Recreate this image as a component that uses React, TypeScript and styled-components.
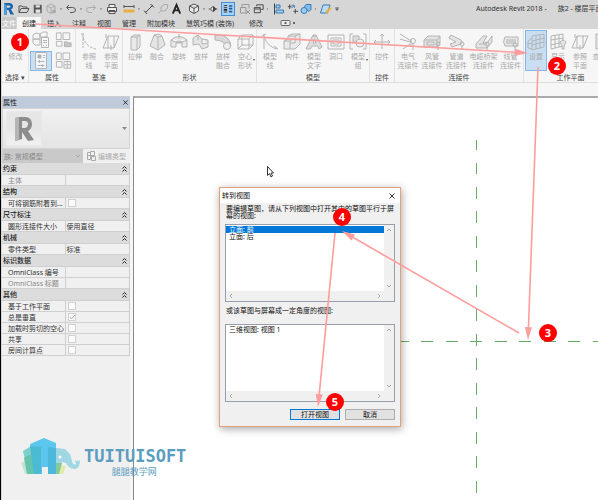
import React from "react";
import styled, { createGlobalStyle, css } from "styled-components";

const Global = createGlobalStyle`
  * { box-sizing: border-box; }
  html, body { margin: 0; height: 100%; overflow: hidden; }
  #root { height: 100%; }
  body, button, select, input, table {
    font-family: "Noto Sans", "Noto Sans CJK SC", sans-serif;
    font-size: 7px;
    line-height: 9px;
    color: #333;
  }
  button { border: 0; padding: 0; margin: 0; background: none; }
  svg { display: block; }
`;

const Window = styled.div`
  position: relative;
  display: flex;
  flex-direction: column;
  height: 100vh;
  overflow: hidden;
  border-left: 1px solid #000;
  padding-left: 1px;
  background: #d6d6d6;
`;

/* ---------- title bar ---------- */

const TitleBar = styled.header`
  display: flex;
  align-items: center;
  flex: none;
  height: 17px;
  overflow: hidden;
  white-space: nowrap;
`;

const QuickButton = styled.button<{ $w: number; $on?: boolean }>`
  display: flex;
  flex: none;
  align-items: center;
  justify-content: center;
  width: ${(p) => p.$w}px;
  height: 14px;
  ${(p) =>
    p.$on &&
    css`
      background: #a9d0f5;
      border: 1px solid #3d8fdd;
    `}
`;

const Spacer = styled.span<{ $w: number }>`
  flex: none;
  width: ${(p) => p.$w}px;
`;

const Title = styled.h1`
  display: flex;
  gap: 11px;
  margin: 0 0 0 135px;
  font-size: 7px;
  font-weight: 400;
  color: #333;
`;

const quickArt: Record<string, React.ReactNode> = {
  logo: (
    <>
      <path d="M2 1h5q4 0 4 3.500q0 2-2 3l3 5H8.500L6.500 8H5v4.500H2z" fill="#1b62a8" />
      <path d="M5 3.500h2q1.500 0 1.500 1T7 5.800H5z" fill="#d6d6d6" />
      <path d="M2 1l3 2.500v9H2z" fill="#4d9ad8" />
    </>
  ),
  open: <path d="M2 10.500V4h3l1 1h4v1.500M2 10.500l2-4h8l-2 4z" fill="none" stroke="#555" />,
  save: (
    <>
      <path d="M3 2.500h8.500v9H3z" fill="#555" />
      <path d="M5 3h4.500v2.500H5zM5 7.500h5V11H5z" fill="#e6e6e6" />
    </>
  ),
  sync: (
    <>
      <path d="M7 2l4 2v5l-4 2.500L3 9V4zM3 4l4 2 4-2M7 6v5" fill="none" stroke="#aaa" />
      <circle cx="10" cy="9.500" r="2" fill="#aaa" />
    </>
  ),
  undo: <path d="M5 3L2.500 5.500 5 8M3 5.500h5.500q3 0 3 2.500T8 10.500H6" fill="none" stroke="#555" />,
  redo: <path d="M9 3l2.500 2.500L9 8M11 5.500H5.500q-3 0-3 2.500T6 10.500h2" fill="none" stroke="#aaa" />,
  print: <path d="M4 2.500h6v3H4zM2.500 5.500h9v4h-9zM4 8.500h6v3H4z" fill="#eee" stroke="#555" />,
  measure: (
    <>
      <path d="M1.500 7.500h11v3h-11z" fill="#e8b040" />
      <path d="M2 4.500h10M2 3v3M12 3v3" stroke="#555" fill="none" />
    </>
  ),
  line: <path d="M3 11l8-8M2 8.500l3 3.500M8.500 2l3.500 3.500" stroke="#444" fill="none" />,
  tag: <path d="M2.500 11.500L5 8.500M5 8.500V5l3-2.500h3.500V6L9 9H5" stroke="#aaa" fill="none" />,
  text: <path d="M3 12L7 2.500 11 12M4.500 8.500h5" stroke="#222" strokeWidth="2" fill="none" />,
  cube: <path d="M7 2l4.500 2v5L7 11.500 2.500 9V4zM2.500 4L7 6.500 11.500 4M7 6.500v5" stroke="#555" fill="#eaeaea" />,
  section: (
    <>
      <path d="M2 7h2M10 7h2" stroke="#444" />
      <circle cx="7" cy="7" r="2.500" fill="#eee" stroke="#444" />
      <path d="M7 3.500l4 3.500-4 3.500z" fill="#444" />
    </>
  ),
  thin: (
    <>
      <path d="M2 3h4M2 5.500h4M2 10.500h4" stroke="#222" strokeWidth="1" />
      <path d="M2 8h4" stroke="#222" strokeWidth="2" />
      <path d="M8 3.500h4M8 6.500h4M8 10h4" stroke="#1d5d9c" strokeWidth="2" />
    </>
  ),
  close: <path d="M4 5V2.500h7v4M2.500 5.500H8V11H2.500zM8 8l4 4m0-4l-4 4" stroke="#999" fill="none" />,
  windows: <path d="M5 4V2.500h7v5h-2M2.500 5.500H9V11H2.500zM2.500 7H9" stroke="#444" fill="none" />,
  alignLeft: (
    <>
      <path d="M2.500 1.500v11" stroke="#444" />
      <path d="M4 3h4v3H4zM4 8h7.500v3H4z" fill="#9ecbf0" stroke="#3b7cb8" />
    </>
  ),
  move: (
    <>
      <path d="M4 2v5M2 4.500h4M10 7v5M8 9.500h5" stroke="#444" fill="none" />
      <path d="M6 6l3-3M9 3v3M9 3H6" stroke="#3b7cb8" fill="none" />
    </>
  ),
  join: (
    <>
      <path d="M5 5.500L7 2.500h5v5l-2 2z" fill="#7fbdec" stroke="#3b7cb8" />
      <circle cx="5" cy="8.500" r="3" fill="#9ecbf0" stroke="#3b7cb8" />
    </>
  ),
  edit: (
    <>
      <path d="M4 3h7l-2.500 8h-7z" fill="#bcdcf6" stroke="#3b7cb8" />
      <path d="M6 10l5-5 1.500 1.500L8 11.500z" fill="#e8b040" />
    </>
  ),
  menu: <path d="M4 4.500h6M4.500 6.500h5L7 9.500z" stroke="#555" fill="#555" />,
  dot: <path d="M5.500 6.500h3L7 8z" fill="#555" stroke="#555" />,
};

function QuickIcon({ name }: { name: string }) {
  return (
    <svg width="14" height="14" viewBox="0 0 14 14" aria-hidden="true">
      {quickArt[name]}
    </svg>
  );
}

const quickItems: [string, number, string?][] = [
  ["logo", 14, "Revit"],
  ["open", 15, "打开"],
  ["save", 13, "保存"],
  ["sync", 14, "同步"],
  ["dot", 6],
  ["undo", 14, "放弃"],
  ["dot", 6],
  ["redo", 14, "重做"],
  ["dot", 6],
  ["print", 16, "打印"],
  ["", 2],
  ["measure", 14, "测量"],
  ["dot", 6],
  ["line", 14, "尺寸标注"],
  ["tag", 14, "标记"],
  ["text", 13, "文字"],
  ["", 4],
  ["cube", 14, "三维视图"],
  ["dot", 6],
  ["section", 12, "剖面"],
  ["", 2],
  ["thin", 14, "细线"],
  ["", 3],
  ["close", 14, "关闭隐藏窗口"],
  ["windows", 13, "切换窗口"],
  ["dot", 5],
  ["", 2],
  ["alignLeft", 14, "对齐"],
  ["move", 13, "移动"],
  ["join", 14, "连接"],
  ["dot", 5],
  ["edit", 15, "编辑"],
  ["menu", 8, "自定义"],
];

/* ---------- tabs ---------- */

const Tabs = styled.nav`
  display: flex;
  flex: none;
  height: 12px;
  gap: 1px;
  white-space: nowrap;
`;

const Tab = styled.button<{ $kind?: "file" | "active" | "wide" }>`
  flex: none;
  padding: 0 5px;
  height: 12px;
  ${(p) =>
    p.$kind === "file" &&
    css`
      padding: 0;
      background: #c8c8c8;
      color: #fff;
    `}
  ${(p) =>
    p.$kind === "active" &&
    css`
      background: #f6f6f6;
      color: #222;
    `}
  ${(p) =>
    p.$kind === "wide" &&
    css`
      padding-right: 9px;
    `}
`;

/* ---------- ribbon ---------- */

const Ribbon = styled.section`
  display: flex;
  flex: none;
  height: 54px;
  overflow: hidden;
  background: #f6f6f6;
  border-bottom: 1px solid #ddd;
`;

const Group = styled.div<{ $w: number }>`
  display: flex;
  flex-direction: column;
  flex: none;
  width: ${(p) => p.$w}px;
  padding-top: 1px;
  border-right: 1px solid #e2e2e2;
`;

const Tools = styled.div<{ $pad?: number }>`
  display: flex;
  height: 42px;
  padding-left: ${(p) => p.$pad ?? 1}px;
`;

const GroupLabel = styled.div`
  padding-top: 1px;
  text-align: center;
  white-space: nowrap;
  color: #444;
`;

const Tool = styled.button<{ $w?: number; $on?: boolean }>`
  position: relative;
  display: flex;
  flex-direction: column;
  flex: none;
  align-items: center;
  width: ${(p) => p.$w ?? 22}px;
  height: 41px;
  padding-top: 1px;
  border: 1px solid ${(p) => (p.$on ? "#86b6e6" : "transparent")};
  background: ${(p) => (p.$on ? "#c8def3" : "none")};
  color: #aaa;
`;

const ToolText = styled.span`
  white-space: pre;
  text-align: center;
`;

const MoreMark = styled.i`
  position: absolute;
  right: 0;
  bottom: 9px;
  border: 1px solid transparent;
  border-top: 2px solid #555;
  border-bottom: 0;
`;

const PropGrid = styled.div`
  display: grid;
  grid-template-columns: 22px 21px;
  grid-template-rows: 20px 20px;
  gap: 1px;
`;

const PropButton = styled.button<{ $on?: boolean }>`
  display: flex;
  align-items: center;
  justify-content: center;
  border: 1px solid ${(p) => (p.$on ? "#86b6e6" : "transparent")};
  background: ${(p) => (p.$on ? "#c8def3" : "none")};
`;

const toolArt: Record<string, React.ReactNode> = {
  arrow: <path d="M7 3v12l3-3 2 5 2-1-2-5h4z" />,
  types: (
    <>
      <path d="M2 5l3-2 4 1v5H2zM9 4l3-2h4v5H9zM2 9h7v6H4l-2-2z" />
      <path d="M10.500 7.500h7v10h-7z" fill="#f6f6f6" />
      <path d="M12 10.500h4M12 12.500h4M12 15.500h1M15 15.500h1" />
    </>
  ),
  family: (
    <>
      <path d="M2.500 2.500h5v7h-5zM9.500 2.500h7v7h-7zM2.500 11.500h6v5h-6z" />
      <path d="M11 12h3l1 1h3v4h-7z" fill="#c4c4c4" />
    </>
  ),
  props: (
    <>
      <path d="M4.500 1.500h11v16h-11z" fill="#f2f6fa" />
      <path d="M7 4h3v3H7z" fill="#aaa" />
      <path d="M12 4.500h2M12 6.500h2M6.500 10.500h7M6.500 14.500h7M8.500 9v3M11.500 13v3" />
    </>
  ),
  cats: (
    <>
      <path d="M2.500 1.500h5v7h-5zM9.500 1.500h7v7h-7zM2.500 10.500h6v6h-6z" />
      <path d="M10.500 10.500h7v7h-7zM14 10.500v7M10.500 14h7" fill="#f6f6f6" />
    </>
  ),
  refLine: <path d="M4 2v14M4 5q3 10 13 12M2 2h4" strokeDasharray="3 1" />,
  plane: <path d="M7 4h11l-5 12H2zM7 4v12M13 4v12M5 2v4M10 13v5" />,
  extrude: <path d="M6 5l3-2h6v12l-3 3H6zM6 5h6v13M12 5l3-2" fill="#e9e9e9" />,
  blend: <path d="M7 3l5-1 3 2 3 9-7 5-8-4zM7 3l4 2 4-1M11 5v13" fill="#e4e4e4" />,
  revolve: <path d="M2 8q8-7 16 0v7h-5v-4H7v4H2zM2 8q8 5 16 0M7 11q0-2 3-2t3 2M10 2v5" fill="#e9e9e9" />,
  sweep: <path d="M2 6l5-3 4 4 6 1v7l-6 2-3-5-6 1zM11 7v5l6-1M7 3v5" fill="#e4e4e4" />,
  sweepBlend: (
    <>
      <path d="M2 3h6q9 2 10 11l-4 3Q12 8 2 8z" fill="#d9d9d9" />
      <circle cx="14" cy="14" r="3.500" fill="#f0f0f0" />
    </>
  ),
  voidForm: <path d="M3 7l4-4h11v10l-4 4H3zM3 7h11v10M14 7l4-4M7 3v10h11M3 17l4-4" />,
  modelLine: <path d="M4 2v15M4 5q4 10 13 12M2 4l4-2M14 14l4 3" />,
  component: <path d="M2 9l4-2V4l4-2h8v10l-5 5H2zM2 9h6v8M6 4h7l5-2M13 4v7H8M8 9l3-2" fill="#e9e9e9" />,
  modelText: <path d="M2 17L9 3h3l6 12-3 2-1.500-3H8l-1.500 3zM9 11h3l-1.500-4zM9 3l1 2M12 3l-1 2" fill="#dedede" />,
  opening: <path d="M2 3h16v14H2zM5 6h10v8H5zM7 8h6v4H7z" />,
  group: (
    <>
      <path d="M5 2H2v15h3M15 2h3v15h-3" />
      <path d="M5 4h6v6H5z" fill="#ddd" />
      <circle cx="12" cy="11" r="4" fill="#f0f0f0" />
    </>
  ),
  control: <path d="M10 2v15M2 10h16M8 4l2-2 2 2M4 8l-2 2 2 2M16 8l2 2-2 2" />,
  electric: (
    <>
      <path d="M2 2l11 7M2 7l10 3M5 17l7-5M13 7v8" />
      <circle cx="15" cy="9" r="2.500" />
      <path d="M15 12v6" />
    </>
  ),
  duct: (
    <>
      <path d="M2 8l4-4h12v7l-3 4H2zM2 8h13v7M15 8l3-4M5 10h7v3H5z" fill="#e4e4e4" />
      <circle cx="16" cy="12" r="2" />
      <path d="M16 14v4" />
    </>
  ),
  pipe: (
    <>
      <path d="M4 3l10 5q3 2 0 4l-9 3-2-3 6-2-7-4z" fill="#e4e4e4" />
      <circle cx="15" cy="12" r="2" />
      <path d="M15 14v4" />
    </>
  ),
  tray: (
    <>
      <path d="M2 12l7-8h4l-4 7h4l5-7v6l-5 6H2zM5 12h8" fill="#e4e4e4" />
      <circle cx="13" cy="12" r="2" />
      <path d="M13 14v4" />
    </>
  ),
  conduit: (
    <>
      <path d="M4 5h13v9H4q-3-4 0-9zM6 7v5M8 7v5M10 7v5M12 7v5M14 7v5" fill="#e8e8e8" />
      <circle cx="14" cy="13" r="2" />
      <path d="M14 15v4" />
    </>
  ),
  setPlane: <path d="M6 4l12-2v13l-12 3zM6 9l12-3M6 13l12-3M10 3v14M14 3v13M6 6L2 9v7l4 1M2 12l4-1" />,
  showPlane: (
    <>
      <path d="M3 4l12-2v12L3 17zM3 8l12-2M3 13l12-3M7 3v13M11 3v12" />
      <path d="M12 10q3-4 6 0l-2 4v3h-2v-3z" fill="#e4e4e4" />
    </>
  ),
  viewer: <path d="M3 2h14v15H3zM6 5h8v9H6z" fill="#e4e4e4" />,
};

function ToolIcon({ name }: { name: string }) {
  return (
    <svg width="20" height="20" viewBox="0 0 20 20" fill="none" stroke="#b4b4b4" strokeWidth="1" aria-hidden="true">
      {toolArt[name]}
    </svg>
  );
}

type ToolDef = { icon: string; text: string; w?: number; on?: boolean; more?: boolean };
type GroupDef = { name: string; w: number; pad?: number; tools: ToolDef[] };

const groups: GroupDef[] = [
  { name: "基准", w: 47, pad: 2, tools: [
    { icon: "refLine", text: "参照\n线" },
    { icon: "plane", text: "参照\n平面" },
  ] },
  { name: "形状", w: 134, tools: [
    { icon: "extrude", text: "拉伸" },
    { icon: "blend", text: "融合" },
    { icon: "revolve", text: "旋转" },
    { icon: "sweep", text: "放样" },
    { icon: "sweepBlend", text: "放样\n融合" },
    { icon: "voidForm", text: "空心\n形状", more: true },
  ] },
  { name: "模型", w: 113, pad: 2, tools: [
    { icon: "modelLine", text: "模型\n线" },
    { icon: "component", text: "构件" },
    { icon: "modelText", text: "模型\n文字" },
    { icon: "opening", text: "洞口" },
    { icon: "group", text: "模型\n组", more: true },
  ] },
  { name: "控件", w: 25, tools: [{ icon: "control", text: "控件" }] },
  { name: "连接件", w: 129, tools: [
    { icon: "electric", text: "电气\n连接件", w: 24 },
    { icon: "duct", text: "风管\n连接件", w: 24 },
    { icon: "pipe", text: "管道\n连接件", w: 25 },
    { icon: "tray", text: "电缆桥架\n连接件", w: 29 },
    { icon: "conduit", text: "线管\n连接件", w: 25 },
  ] },
  { name: "工作平面", w: 94, tools: [
    { icon: "setPlane", text: "设置", on: true },
    { icon: "showPlane", text: "显示" },
    { icon: "plane", text: "参照\n平面" },
    { icon: "viewer", text: "查看器", w: 24 },
  ] },
];

/* ---------- workspace ---------- */

const Workspace = styled.main`
  display: flex;
  flex: 1;
  min-height: 0;
  padding-top: 13px;
  background: #f6f6f6;
`;

const Palette = styled.aside`
  flex: none;
  width: 128px;
  border-top: 1px solid #ccc;
  background: #f0f0f0;
`;

const PaletteHead = styled.div`
  display: flex;
  align-items: center;
  justify-content: space-between;
  height: 11px;
  padding: 0 1px;
  background: #bfcbdb;
  color: #222;
`;

const CloseButton = styled.button`
  display: flex;
  align-items: center;
  justify-content: center;
  width: 8px;
  height: 9px;
`;

const TypePicker = styled.button`
  display: flex;
  align-items: center;
  justify-content: space-between;
  width: 100%;
  height: 41px;
  padding: 0 2px 0 3px;
  border: 1px solid #d4d4d4;
  background: linear-gradient(#f1f1f1, #e4e4e4);
`;

const Thumb = styled.span`
  display: flex;
  align-items: center;
  justify-content: center;
  width: 36px;
  height: 35px;
  border: 1px solid #e8e8e8;
  background: linear-gradient(#e6e6e6 50%, #efefef 90%);
`;

const TypeRow = styled.div`
  display: flex;
  align-items: center;
  height: 14px;
`;

const SelectBox = styled.div`
  display: grid;
  align-items: center;
  width: 81px;
  height: 14px;
  background: #c9c9c9;
  > * { grid-area: 1 / 1; }
  > svg { justify-self: end; margin-right: 2px; pointer-events: none; }
`;

const TypeSelect = styled.select`
  appearance: none;
  height: 14px;
  border: 0;
  border-radius: 0;
  padding: 0 2px;
  background: none;
  color: #888;
`;

const EditType = styled.button`
  display: flex;
  flex: 1;
  align-items: center;
  gap: 2px;
  padding-left: 3px;
  color: #aaa;
`;

const PropTable = styled.table`
  width: 100%;
  table-layout: fixed;
  border-collapse: separate;
  border-spacing: 0;
  border-right: 1px solid #ccc;
`;

const SectionHead = styled.th`
  height: 12px;
  padding: 0 2px 0 1px;
  background: #dcdcdc;
  border-bottom: 1px solid #cfcfcf;
  text-align: left;
  font-weight: 500;
  color: #222;
`;

const HeadLine = styled.span`
  display: flex;
  align-items: center;
  justify-content: space-between;
`;

const NameCell = styled.th<{ $dim?: boolean }>`
  height: 11px;
  padding: 0 0 0 6px;
  border-bottom: 1px solid #cfcfcf;
  border-right: 1px solid #cfcfcf;
  overflow: hidden;
  white-space: nowrap;
  text-align: left;
  font-weight: 400;
  color: ${(p) => (p.$dim ? "#888" : "#333")};
`;

const ValueCell = styled.td`
  height: 11px;
  padding: 0 1px;
  border-bottom: 1px solid #cfcfcf;
`;

const Check = styled.input`
  appearance: none;
  display: block;
  width: 8px;
  height: 8px;
  margin: 0 1px;
  border: 1px solid #d0d0d0;
  background: #fcfcfc;
`;

const CheckBox = styled.span`
  display: grid;
  width: 10px;
  > * { grid-area: 1 / 1; }
  > svg { pointer-events: none; }
`;

type Prop = { label: string; value?: string; check?: boolean; dim?: boolean };
const sections: { name: string; rows: Prop[] }[] = [
  { name: "约束", rows: [{ label: "主体", dim: true }] },
  { name: "结构", rows: [{ label: "可将钢筋附着到...", check: false }] },
  { name: "尺寸标注", rows: [{ label: "圆形连接件大小", value: "使用直径" }] },
  { name: "机械", rows: [{ label: "零件类型", value: "标准" }] },
  { name: "标识数据", rows: [{ label: "OmniClass 编号" }, { label: "OmniClass 标题", dim: true }] },
  { name: "其他", rows: [
    { label: "基于工作平面", check: false },
    { label: "总是垂直", check: true },
    { label: "加载时剪切的空心", check: false },
    { label: "共享", check: false },
    { label: "房间计算点", check: false },
  ] },
];

const Canvas = styled.div`
  flex: 1;
  min-width: 0;
  margin-left: 3px;
  border-top: 2px solid #aaa;
  border-left: 1px solid #888;
  background: #fff;
`;

/* ---------- dialog ---------- */

const Dialog = styled.div`
  position: absolute;
  left: 218px;
  top: 187px;
  width: 182px;
  border: 1px solid #e3a179;
  background: #f0f0f0;
  box-shadow: 1px 2px 8px rgba(0, 0, 0, 0.35);
  color: #111;
`;

const DialogHead = styled.div`
  display: flex;
  align-items: center;
  justify-content: space-between;
  height: 15px;
  padding: 0 4px 0 2px;
  background: #fff;
`;

const DialogBody = styled.div`
  padding: 2px 5px 6px;
`;

const Prompt = styled.p<{ $single?: boolean }>`
  margin: 0;
  padding: ${(p) => (p.$single ? "5px 0 10px 1px" : "0 0 5px 1px")};
  line-height: 7px;
`;

const ListBox = styled.div`
  display: grid;
  grid-template-columns: 1fr 10px;
  grid-template-rows: 1fr 10px;
  height: 78px;
  border: 1px solid #9a9eac;
  background: #f0f0f0;
`;

const List = styled.ul`
  margin: 0;
  padding: 1px 0;
  list-style: none;
  background: #fff;
`;

const Option = styled.li<{ $on?: boolean }>`
  height: 7px;
  padding-left: 3px;
  line-height: 7px;
  background: ${(p) => (p.$on ? "#0078d7" : "none")};
  color: ${(p) => (p.$on ? "#fff" : "#111")};
`;

const ScrollBar = styled.div<{ $vertical?: boolean }>`
  display: flex;
  flex-direction: ${(p) => (p.$vertical ? "column" : "row")};
  align-items: center;
  justify-content: space-between;
  padding: 2px;
`;

const Actions = styled.div`
  display: flex;
  justify-content: flex-end;
  gap: 5px;
  padding-top: 7px;
`;

const DialogButton = styled.button<{ $main?: boolean }>`
  width: 50px;
  height: 11px;
  color: #111;
  background: #e1e1e1;
  border: 1px solid ${(p) => (p.$main ? "#0078d7" : "#adadad")};
`;

/* ---------- annotations ---------- */

const Overlay = styled.svg`
  position: absolute;
  left: -1px;
  top: 0;
  pointer-events: none;
`;

const Badge = styled.span<{ $x: number; $y: number }>`
  position: absolute;
  left: ${(p) => p.$x}px;
  top: ${(p) => p.$y}px;
  width: 18px;
  height: 18px;
  border-radius: 50%;
  background: #f00;
  color: #fff;
  font: 700 11px/17px "Noto Sans", sans-serif;
  text-align: center;
`;

const Brand = styled.div`
  position: absolute;
  left: 20px;
  bottom: 22px;
  display: flex;
  gap: 3px;
`;

const BrandText = styled.div`
  display: flex;
  flex-direction: column;
  align-items: center;
  padding-top: 10px;
  color: #5b9dbf;
`;

const BrandName = styled.strong`
  font: 700 17px/19px "DejaVu Sans Mono", monospace;
`;

const BrandSub = styled.span`
  padding-right: 2px;
  font-size: 9px;
  line-height: 12px;
`;

function Chevron({ dir }: { dir: "up" | "down" | "left" | "right" }) {
  const d = { up: "M1 4l2-2 2 2", down: "M1 2l2 2 2-2", left: "M4 1L2 3l2 2", right: "M2 1l2 2-2 2" }[dir];
  return (
    <svg width="6" height="6" viewBox="0 0 6 6" fill="none" stroke="#aaa" aria-hidden="true">
      <path d={d} />
    </svg>
  );
}

function ListPanel({ label, items, selected }: { label: string; items: string[]; selected?: number }) {
  return (
    <ListBox>
      <List role="listbox" aria-label={label}>
        {items.map((t, i) => (
          <Option key={t} role="option" aria-selected={i === selected} $on={i === selected}>
            {t}
          </Option>
        ))}
      </List>
      <ScrollBar $vertical>
        <Chevron dir="up" />
        <Chevron dir="down" />
      </ScrollBar>
      <ScrollBar>
        <Chevron dir="left" />
        <Chevron dir="right" />
      </ScrollBar>
    </ListBox>
  );
}

function Cross({ size, color }: { size: number; color: string }) {
  return (
    <svg width={size} height={size} viewBox="0 0 6 6" stroke={color} aria-hidden="true">
      <path d="M0.500 0.500l5 5m0-5l-5 5" />
    </svg>
  );
}

function Arrow({ from, to }: { from: [number, number]; to: [number, number] }) {
  const dx = to[0] - from[0];
  const dy = to[1] - from[1];
  const len = Math.hypot(dx, dy);
  const ux = dx / len;
  const uy = dy / len;
  const bx = to[0] - ux * 13;
  const by = to[1] - uy * 13;
  return (
    <g>
      <path d={`M${from[0]} ${from[1]}L${bx} ${by}`} stroke="#ff9c9c" strokeWidth="1.6" />
      <path
        d={`M${to[0]} ${to[1]}L${bx - uy * 3.5} ${by + ux * 3.5}L${bx + uy * 3.5} ${by - ux * 3.5}z`}
        fill="#ff9c9c"
      />
    </g>
  );
}

function PropRow({ row, id }: { row: Prop; id: string }) {
  const checkable = row.check !== undefined;
  return (
    <tr>
      <NameCell scope="row" $dim={row.dim}>
        {checkable ? <label htmlFor={id}>{row.label}</label> : row.label}
      </NameCell>
      <ValueCell>
        {checkable ? (
          <CheckBox>
            <Check id={id} type="checkbox" defaultChecked={row.check} />
            {row.check && (
              <svg width="10" height="8" viewBox="0 0 10 8" fill="none" stroke="#aaa" aria-hidden="true">
                <path d="M3 4l1.500 2L8 2" />
              </svg>
            )}
          </CheckBox>
        ) : (
          row.value
        )}
      </ValueCell>
    </tr>
  );
}

export default function App() {
  return (
    <Window>
      <Global />
      <TitleBar>
        {quickItems.map(([name, w, label], i) =>
          name ? (
            <QuickButton key={i} $w={w} $on={name === "thin"} aria-label={label ?? "更多"}>
              <QuickIcon name={name} />
            </QuickButton>
          ) : (
            <Spacer key={i} $w={w} />
          ),
        )}
        <Title>
          <span>Autodesk Revit 2018 -</span>
          <span>族2 - 楼层平面</span>
        </Title>
      </TitleBar>

      <Tabs>
        <Tab $kind="file">文件</Tab>
        <Tab $kind="active">创建</Tab>
        <Tab>插入</Tab>
        <Tab>注释</Tab>
        <Tab>视图</Tab>
        <Tab>管理</Tab>
        <Tab>附加模块</Tab>
        <Tab $kind="wide">慧筑巧模 (装饰)</Tab>
        <Tab>修改</Tab>
        <Tab aria-label="显示选项">
          <svg width="24" height="8" viewBox="0 0 24 8" fill="none" stroke="#666" aria-hidden="true">
            <rect x="7" y="1.500" width="9" height="5" rx="1" fill="#eee" />
            <path d="M10.500 4h2M19 4h2" strokeWidth="2" />
          </svg>
        </Tab>
      </Tabs>

      <Ribbon>
        <Group $w={27}>
          <Tools>
            <Tool $w={25}>
              <ToolIcon name="arrow" />
              <ToolText>修改</ToolText>
            </Tool>
          </Tools>
          <GroupLabel>选择 ▾</GroupLabel>
        </Group>
        <Group $w={47}>
          <Tools>
            <PropGrid>
              <PropButton aria-label="族类型"><ToolIcon name="types" /></PropButton>
              <PropButton aria-label="族类别"><ToolIcon name="family" /></PropButton>
              <PropButton aria-label="属性" $on><ToolIcon name="props" /></PropButton>
              <PropButton aria-label="类型属性"><ToolIcon name="cats" /></PropButton>
            </PropGrid>
          </Tools>
          <GroupLabel>属性</GroupLabel>
        </Group>
        {groups.map((g) => (
          <Group key={g.name} $w={g.w}>
            <Tools $pad={g.pad}>
              {g.tools.map((t) => (
                <Tool key={t.icon} $w={t.w} $on={t.on}>
                  <ToolIcon name={t.icon} />
                  <ToolText>{t.text}</ToolText>
                  {t.more && <MoreMark />}
                </Tool>
              ))}
            </Tools>
            <GroupLabel>{g.name}</GroupLabel>
          </Group>
        ))}
      </Ribbon>

      <Workspace>
        <Palette aria-label="属性">
          <PaletteHead>
            <span>属性</span>
            <CloseButton aria-label="关闭"><Cross size={5} color="#111" /></CloseButton>
          </PaletteHead>
          <TypePicker aria-label="类型选择器">
            <Thumb>
              <svg width="24" height="28" viewBox="0 0 24 28" aria-hidden="true">
                <path d="M3 3l4-1h7q6 1 6 7 0 5-4 7l6 9-6 1-6-9v7l-7 2z" fill="#8d8d8d" />
                <path d="M3 3l4-1v23l-4 1z" fill="#b5b5b5" />
                <path d="M10 6h3q3 0 3 3t-3 4h-3z" fill="#e6e6e6" />
              </svg>
            </Thumb>
            <svg width="5" height="4" viewBox="0 0 5 4" fill="#888" aria-hidden="true">
              <path d="M0 0h5L2.500 3z" />
            </svg>
          </TypePicker>
          <TypeRow>
            <SelectBox>
              <TypeSelect aria-label="族">
                <option>族: 常规模型</option>
              </TypeSelect>
              <Chevron dir="down" />
            </SelectBox>
            <EditType>
              <svg width="10" height="10" viewBox="0 0 10 10" fill="none" stroke="#aaa" aria-hidden="true">
                <path d="M1.500 1.500h3v7h-3zM4.500 .5h4v4h-4zM5.500 5.500h4v4h-4zM1.500 4.500h3" />
              </svg>
              编辑类型
            </EditType>
          </TypeRow>
          <PropTable>
            {sections.map((s) => (
              <tbody key={s.name}>
                <tr>
                  <SectionHead colSpan={2}>
                    <HeadLine>
                      {s.name}
                      <svg width="5" height="6" viewBox="0 0 5 6" fill="none" stroke="#222" aria-hidden="true">
                        <path d="M.5 2.500l2-2 2 2M.5 5.500l2-2 2 2" />
                      </svg>
                    </HeadLine>
                  </SectionHead>
                </tr>
                {s.rows.map((r) => (
                  <PropRow key={r.label} row={r} id={`p-${r.label}`} />
                ))}
              </tbody>
            ))}
          </PropTable>
        </Palette>
        <Canvas />
      </Workspace>

      <Overlay width="598" height="500" viewBox="0 0 598 500" fill="none" aria-hidden="true">
        <path
          d="M476.500 150v-10M476.500 163v11M476.500 187V500M397 341.500H598"
          stroke="#62ad62"
          strokeDasharray="12 12 12 13"
        />
        <path d="M267.500 166.500v9l2-2 1.500 3.500 1.500-1-1.500-3h2.500z" fill="#fff" stroke="#333" />
      </Overlay>

      <Dialog role="dialog" aria-label="转到视图">
        <DialogHead>
          <span>转到视图</span>
          <CloseButton aria-label="关闭"><Cross size={6} color="#333" /></CloseButton>
        </DialogHead>
        <DialogBody>
          <Prompt>要编辑草图，请从下列视图中打开其中的草图平行于屏幕的视图:</Prompt>
          <ListPanel label="平行视图" items={["立面: 前", "立面: 后"]} selected={0} />
          <Prompt $single>或该草图与屏幕成一定角度的视图:</Prompt>
          <ListPanel label="角度视图" items={["三维视图: 视图 1"]} />
          <Actions>
            <DialogButton $main>打开视图</DialogButton>
            <DialogButton>取消</DialogButton>
          </Actions>
        </DialogBody>
      </Dialog>

      <Brand>
        <svg width="60" height="38" viewBox="0 0 60 38" aria-hidden="true">
          <path d="M0 26l9-5 5 16H4z" fill="#c6e3d0" />
          <path d="M2 14l8-5 11 1v27H7z" fill="#7dd0cb" />
          <path d="M3 21l7-4 5 20H6z" fill="#66c4ad" />
          <path d="M27 10l17 2 5 5 2 7q1 5 4 3l-1-4q2 2 5 0 0 9-6 9-6-1-8-6l-4-1-4 12H27z" fill="#9fd7e2" />
          <path d="M38 28l7 1-3 8h-6z" fill="#e2eaa8" />
          <path d="M9 7l14-6 12 5v31h-8v-7h-6v7h-6z" fill="#5cc6ee" />
          <path d="M9 9l11 1v27h-7z" fill="#4bbad3" />
          <path d="M27 10l8 1v26h-8z" fill="#4cb9dc" />
          <path d="M35 26h6l-3 11h-3z" fill="#86ca9b" />
          <circle cx="39" cy="20" r="1.500" fill="#fff" />
        </svg>
        <BrandText>
          <BrandName>TUITUISOFT</BrandName>
          <BrandSub>腿腿教学网</BrandSub>
        </BrandText>
      </Brand>

      <Overlay width="598" height="500" viewBox="0 0 598 500" fill="none" aria-hidden="true">
        <Arrow from={[35, 24]} to={[528, 53]} />
        <Arrow from={[538, 67]} to={[528, 340]} />
        <Arrow from={[519, 333]} to={[342, 231]} />
        <Arrow from={[335, 233]} to={[318, 407]} />
      </Overlay>
      <Badge $x={10} $y={33}>1</Badge>
      <Badge $x={547} $y={57}>2</Badge>
      <Badge $x={538} $y={324}>3</Badge>
      <Badge $x={332} $y={208}>4</Badge>
      <Badge $x={325} $y={393}>5</Badge>
    </Window>
  );
}
